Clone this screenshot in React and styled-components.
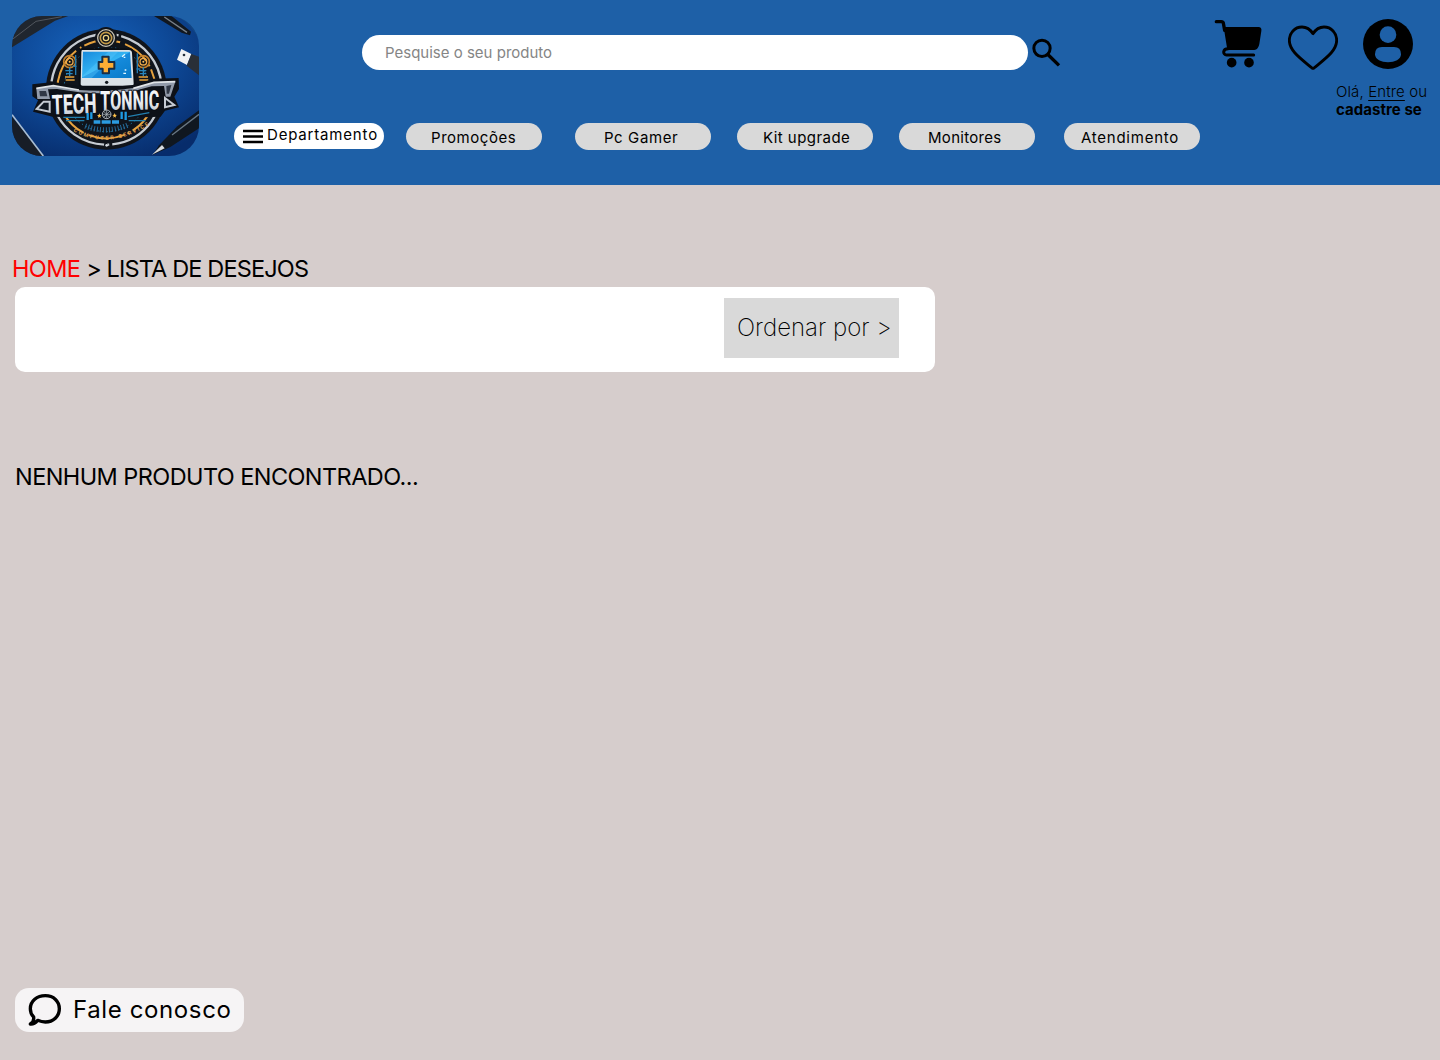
import React from "react";
import styled, { createGlobalStyle } from "styled-components";

const GlobalStyle = createGlobalStyle`
  * { box-sizing: border-box; }
  body { margin: 0; background: #d6cdcc; color: #000; font-family: Inter, "Open Sans", sans-serif; }
`;

const Page = styled.div`
  min-height: 1060px;
  display: flex;
  flex-direction: column;
`;

const Header = styled.header`
  display: flex;
  align-items: flex-start;
  height: 185px;
  background: #1e60a7;
`;

const LogoLink = styled.a`
  display: block;
  flex: none;
  width: 187px;
  height: 140px;
  margin: 16px 35px 0 12px;
  border-radius: 30px;
  overflow: hidden;
  svg { display: block; }
`;

const Center = styled.div`
  width: 966px;
  flex: none;
  padding-top: 35px;
`;

const SearchRow = styled.form`
  display: flex;
  align-items: center;
  gap: 3px;
  height: 35px;
  margin-left: 128px;
`;

const SearchInput = styled.input`
  width: 666px;
  height: 35px;
  border: 0;
  border-radius: 18px;
  padding: 0 23px;
  background: #fff;
  font: 400 15px Inter, sans-serif;
  outline: none;
  &::placeholder { color: #858585; opacity: 1; }
`;

const IconButton = styled.button`
  border: 0;
  padding: 0;
  background: none;
  display: block;
  color: #000;
  margin-top: ${(p) => p.$top || 0}px;
  svg { display: block; }
`;

const Nav = styled.nav`
  display: flex;
  margin-top: 53px;
`;

const NavPill = styled.a`
  display: flex;
  align-items: flex-start;
  width: ${(p) => (p.$main ? 150 : 136)}px;
  height: ${(p) => (p.$main ? 26 : 27)}px;
  margin-left: ${(p) => p.$gap || 0}px;
  padding-left: ${(p) => p.$inset}px;
  padding-top: ${(p) => (p.$main ? 2 : 5)}px;
  border-radius: 14px;
  background: ${(p) => (p.$main ? "#fff" : "#d9d9d9")};
  font-size: 15px;
  line-height: 20px;
  letter-spacing: ${(p) => p.$track || 0}px;
  white-space: nowrap;
`;

const MenuIcon = styled.svg`
  margin: 4px 4px 0 0;
  flex: none;
`;

const Account = styled.div`
  width: 240px;
  flex: none;
`;

const AccountIcons = styled.div`
  display: flex;
  align-items: flex-start;
  padding: 19px 0 0 14px;
  gap: 25px;
  height: 83px;
`;

const Greeting = styled.p`
  margin: 0 0 0 136px;
  font-size: 15px;
  font-weight: 300;
  line-height: 18px;
  letter-spacing: 0.12px;
  white-space: nowrap;
  strong { display: block; font-weight: 700; letter-spacing: 0.05px; }
`;

const SignIn = styled.a`
  text-decoration: underline;
  text-decoration-thickness: 1px;
  text-underline-offset: 3px;
  text-decoration-skip-ink: none;
`;

const Main = styled.main`
  flex: 1;
  display: flex;
  flex-direction: column;
  align-items: flex-start;
  padding: 68px 15px 28px;
`;

const Breadcrumb = styled.div`
  margin-left: -3px;
  height: 34px;
  font-size: 23.5px;
  line-height: 31px;
  letter-spacing: ${(p) => p.$track}px;
  white-space: pre;
  a { color: #ff0000; letter-spacing: -0.6px; }
`;

const Toolbar = styled.section`
  width: 920px;
  height: 85px;
  display: flex;
  justify-content: flex-end;
  padding: 11px 36px 0 0;
  border-radius: 10px;
  background: #fff;
`;

const SortButton = styled.button`
  width: 175px;
  height: 60px;
  border: 0;
  padding: 0 0 2px 13px;
  background: #d9d9d9;
  color: #000;
  text-align: left;
  white-space: nowrap;
  font: 200 24px Inter, sans-serif;
  letter-spacing: 0.02px;
`;

const Empty = styled.p`
  margin: 89px 0 0;
  font-size: 23.5px;
  line-height: 31px;
  letter-spacing: ${(p) => p.$track}px;
`;

const ContactButton = styled.button`
  display: flex;
  align-items: center;
  gap: 11px;
  width: 229px;
  height: 44px;
  margin-top: auto;
  border: 0;
  padding: 0 0 0 13px;
  border-radius: 14px;
  background: #f6f4f5;
  color: #000;
  font: 400 24px Inter, sans-serif;
  letter-spacing: ${(p) => p.$track}px;
  white-space: nowrap;
`;

const ContactLabel = styled.span`
  padding-bottom: 2px;
`;

const links = [
  { label: "Promoções", gap: 22, inset: 25, track: 0.55 },
  { label: "Pc Gamer", gap: 33, inset: 29, track: 0.6 },
  { label: "Kit upgrade", gap: 26, inset: 26, track: 0.45 },
  { label: "Monitores", gap: 26, inset: 29, track: 0.3 },
  { label: "Atendimento", gap: 29, inset: 17, track: 0.75 },
];

const Logo = () => (
  <svg width="187" height="140" viewBox="36 33 561 420" role="img" aria-label="Tech Tonnic Computer Service">
    <defs>
      <radialGradient id="desk" cx="0.43" cy="0.28" r="0.8">
        <stop offset="0" stopColor="#1764bd" />
        <stop offset="0.5" stopColor="#0e4a99" />
        <stop offset="1" stopColor="#072c6b" />
      </radialGradient>
      <linearGradient id="screen" x1="0" y1="0" x2="1" y2="1">
        <stop offset="0" stopColor="#1789dc" />
        <stop offset="0.48" stopColor="#35b5f3" />
        <stop offset="0.5" stopColor="#168bdc" />
        <stop offset="1" stopColor="#087ac8" />
      </linearGradient>
      <linearGradient id="steel" x1="0" y1="0" x2="0" y2="1">
        <stop offset="0" stopColor="#ffffff" />
        <stop offset="0.6" stopColor="#e6e9ed" />
        <stop offset="1" stopColor="#a7b0bc" />
      </linearGradient>
      <path id="serviceArc" d="M220 379 Q325 438 447 360" />
    </defs>
    <rect x="36" y="33" width="561" height="420" fill="url(#desk)" />
    <path d="M36 33H205L165 47L36 127Z" fill="#20262e" />
    <path d="M36 104L108 49L185 35" fill="none" stroke="#51565e" strokeWidth="3" />
    <path d="M36 335L132 453H36Z" fill="#171d27" />
    <path d="M36 329L130 453" stroke="#a9bdd2" strokeWidth="5" />
    <path d="M530 33H597V106Q575 58 530 33Z" fill="#174c82" opacity=".6" />
    <path d="M462 33H515L573 80L570 91L545 83Z" fill="#11171f" />
    <path d="M493 36L561 82" stroke="#79818a" strokeWidth="4" />
    <path d="M544 132L574 147L561 180L531 164Z" fill="#f0f2f4" />
    <path d="M574 147L597 155V211L560 182Z" fill="#292f38" />
    <circle cx="552" cy="150" r="4" fill="#24303d" />
    <path d="M597 316V370L511 426L459 449L477 421L532 364Z" fill="#101720" />
    <path d="M597 328L516 390" stroke="#697885" strokeWidth="4" />
    <path d="M456 449L486 420L494 430Z" fill="#d8dce0" />

    <circle cx="319" cy="253" r="181" fill="#10141b" />
    <circle cx="319" cy="253" r="166" fill="none" stroke="#c5cbd2" strokeWidth="7" strokeDasharray="180 9 7 8 250 13 6 9" transform="rotate(-145 319 253)" />
    <circle cx="319" cy="253" r="147" fill="none" stroke="#e6a23e" strokeWidth="6" strokeDasharray="82 14 5 10 110 16" transform="rotate(-160 319 253)" />
    <circle cx="319" cy="253" r="127" fill="none" stroke="#2481b6" strokeWidth="3" strokeDasharray="4 9" />
    <circle cx="318" cy="99" r="33" fill="#10141b" />
    <circle cx="318" cy="99" r="25" fill="none" stroke="#c8c2b2" strokeWidth="4" />
    <circle cx="318" cy="99" r="17" fill="none" stroke="#c49b49" strokeWidth="5" />
    <circle cx="318" cy="99" r="8" fill="none" stroke="#edd281" strokeWidth="4" />
    {[209, 430].map((x) => (
      <g key={x}>
        <circle cx={x} cy="170" r="18" fill="none" stroke="#c27e29" strokeWidth="5" />
        <circle cx={x} cy="170" r="10" fill="none" stroke="#efaa48" strokeWidth="4" />
        <circle cx={x} cy="170" r="3" fill="#ffc35b" />
        <path d={`M${x} 187V214M${x - 13} 197h22M${x - 11} 206h20`} stroke="#2785bc" strokeWidth="4" />
        <path d={`M${x - 14} 216h28M${x - 12} 225h27`} stroke="#e6a23e" strokeWidth="4" />
      </g>
    ))}
    <path d="M227 150V210M412 145V205M230 184h-12M409 192h12" stroke="#237bb1" strokeWidth="4" />
    <path d="M248 130H389Q401 130 401 142L407 238Q407 247 397 247H246Q235 247 236 237L239 140Q240 130 248 130Z" fill="#0a0e14" />
    <path d="M247 135H387Q395 135 396 143L401 235Q402 242 394 242H248Q241 242 242 235L244 142Q244 135 247 135Z" fill="#dbe2e7" />
    <path d="M249 140H390L395 219H246Z" fill="url(#screen)" />
    <path d="M247 213L325 140H355L275 219H247Z" fill="#62ceff" opacity=".35" />
    <path d="M307 155H326V171H343V191H327V205H308V191H296V171H307Z" fill="#fbad35" stroke="#172e47" strokeWidth="6" strokeLinejoin="round" />
    <path d="M366 155l9-7M371 157h5M370 205h8M374 195h5" stroke="#e3f8ff" strokeWidth="4" />
    <circle cx="320" cy="232" r="5" fill="#141920" />

    <path d="M97 238L160 231L235 243Q319 250 405 239L460 221L536 219L537 252L523 275L537 307L495 317L482 335Q319 341 157 335L146 332L99 320L114 286L97 274Z" fill="#0d1118" />
    <path d="M109 250L160 242L237 255Q319 262 401 249L462 232L526 230L511 275H497L492 243L455 244L400 259Q319 269 238 262L171 252L144 253L150 282H112Z" fill="#929baa" />
    <path d="M109 250L160 242L237 255M400 250L462 232L526 230" fill="none" stroke="#e0e4e8" strokeWidth="5" />
    <path d="M118 258H138L142 274H120ZM499 243L514 240L507 266H500Z" fill="#303846" />
    <path d="M131 290H149V320L110 312ZM495 279L523 300L495 307Z" fill="#111821" stroke="#c5cbd3" strokeWidth="6" />
    <g fontFamily="Roboto, sans-serif" fontWeight="800" fill="url(#steel)" stroke="#090c12" strokeWidth="6" paintOrder="stroke">
      <text x="156" y="326" fontSize="82" textLength="134" lengthAdjust="spacingAndGlyphs" transform="rotate(-2 224 300)">TECH</text>
      <text x="301" y="314" fontSize="80" textLength="177" lengthAdjust="spacingAndGlyphs" transform="rotate(-.5 388 300)">TONNIC</text>
    </g>
    <path d="M190 337H255M384 335L448 323M198 347H253M386 347H436" stroke="#237fae" strokeWidth="4" />
    <path d="M263 324V345M274 322V342M365 320V342M377 320V345" fill="none" stroke="#1e9be2" strokeWidth="7" />
    <path d="M281 351H357" stroke="#2b9be0" strokeWidth="11" />
    <path d="M303 344V358M334 344V358" stroke="#10141b" strokeWidth="4" />
    <circle cx="320" cy="328" r="13" fill="#151b22" stroke="#a9afb5" strokeWidth="3" />
    <path d="M310 318L330 338M330 318L310 338M320 315V341M307 328H333" stroke="#b4bbc1" strokeWidth="2" />
    <path d="M298 325l2 5 5 1-4 3 1 5-4-3-4 3 1-5-4-3 5-1zM344 324l2 5 5 1-4 3 1 5-4-3-4 3 1-5-4-3 5-1z" fill="#ffc24b" />
    <path d="M256 363Q320 388 386 359" fill="none" stroke="#266a98" strokeWidth="16" strokeDasharray="3 6" />
    <text fontFamily="Roboto, sans-serif" fontSize="16" fontWeight="700" fill="#e3a552"><textPath href="#serviceArc" textLength="240">COMPUTER SERVICE</textPath></text>
    <path d="M318 416V427" stroke="#141921" strokeWidth="11" />
    <circle cx="320" cy="421" r="4" fill="#d8dfe5" />
  </svg>
);

const SearchIcon = () => (
  <svg width="30" height="30" viewBox="153 39 90 90" fill="none" stroke="currentColor">
    <circle cx="186" cy="70" r="24.5" strokeWidth="9" />
    <path d="M202 87L237 121" strokeWidth="10" />
  </svg>
);

const CartIcon = () => (
  <svg width="49" height="49" viewBox="42 42 147 147" fill="none" stroke="currentColor">
    <path d="M49 50H64Q69 50 70 54L74 76" strokeWidth="10" strokeLinecap="round" strokeLinejoin="round" />
    <path d="M71 66H175Q186 66 184 78L178 117Q175 134 163 135H85Q82 135 81 128Z" fill="currentColor" stroke="none" />
    <path d="M84 131C68 131 67 149 80 150H161" strokeWidth="9" strokeLinecap="round" />
    <circle cx="95" cy="173" r="14.5" fill="currentColor" stroke="none" />
    <circle cx="147" cy="173" r="14.5" fill="currentColor" stroke="none" />
  </svg>
);

const HeartIcon = () => (
  <svg width="50" height="45" viewBox="264 61 150 135" fill="none" stroke="currentColor">
    <path d="M339 87C330 73 319 67 306 67C284 67 268 85 268 107C268 138 300 160 336 190Q339 192 342 190C378 160 410 138 410 107C410 85 394 67 372 67C359 67 348 73 339 87Z" strokeWidth="8.5" strokeLinejoin="round" />
  </svg>
);

const UserIcon = () => (
  <svg width="50" height="50" viewBox="489 42 150 150">
    <circle cx="564" cy="117" r="75" fill="currentColor" />
    <g fill="#1e60a7">
      <circle cx="564" cy="89" r="25" />
      <path d="M525 148Q525 126 546 126H582Q603 126 603 148C603 164 584 172 564 172C544 172 525 164 525 148Z" />
    </g>
  </svg>
);

const ChatIcon = () => (
  <svg width="34" height="34" viewBox="84 54 102 102" fill="none" stroke="currentColor" strokeWidth="10" strokeLinejoin="round">
    <path d="M101 126C94 119 91 110 91 101C91 78 111 62 136 62C161 62 178 79 178 101C178 124 160 141 136 141C128 141 120 139 113 136C106 144 98 148 91 147C98 143 102 134 101 126Z" />
  </svg>
);

export default function App() {
  return (
    <Page>
      <GlobalStyle />
      <Header>
        <LogoLink><Logo /></LogoLink>
        <Center>
          <SearchRow>
            <SearchInput placeholder="Pesquise o seu produto" />
            <IconButton type="button" aria-label="Pesquisar"><SearchIcon /></IconButton>
          </SearchRow>
          <Nav>
            <NavPill $main $inset={9} $track={0.82}>
              <MenuIcon width="20" height="15" viewBox="0 0 20 15">
                <path d="M0 2H20M0 7.5H20M0 13H20" stroke="#000" strokeWidth="2.3" />
              </MenuIcon>
              Departamento
            </NavPill>
            {links.map((l) => (
              <NavPill key={l.label} $gap={l.gap} $inset={l.inset} $track={l.track}>{l.label}</NavPill>
            ))}
          </Nav>
        </Center>
        <Account>
          <AccountIcons>
            <IconButton aria-label="Carrinho"><CartIcon /></IconButton>
            <IconButton aria-label="Lista de desejos" $top={6}><HeartIcon /></IconButton>
            <IconButton aria-label="Conta"><UserIcon /></IconButton>
          </AccountIcons>
          <Greeting>
            Olá, <SignIn>Entre</SignIn> ou
            <strong>cadastre se</strong>
          </Greeting>
        </Account>
      </Header>
      <Main>
        <Breadcrumb $track={-0.85}><a>HOME</a>{" > LISTA DE DESEJOS"}</Breadcrumb>
        <Toolbar>
          <SortButton>Ordenar por &gt;</SortButton>
        </Toolbar>
        <Empty $track={-0.58}>NENHUM PRODUTO ENCONTRADO...</Empty>
        <ContactButton $track={0.62}><ChatIcon /><ContactLabel>Fale conosco</ContactLabel></ContactButton>
      </Main>
    </Page>
  );
}
